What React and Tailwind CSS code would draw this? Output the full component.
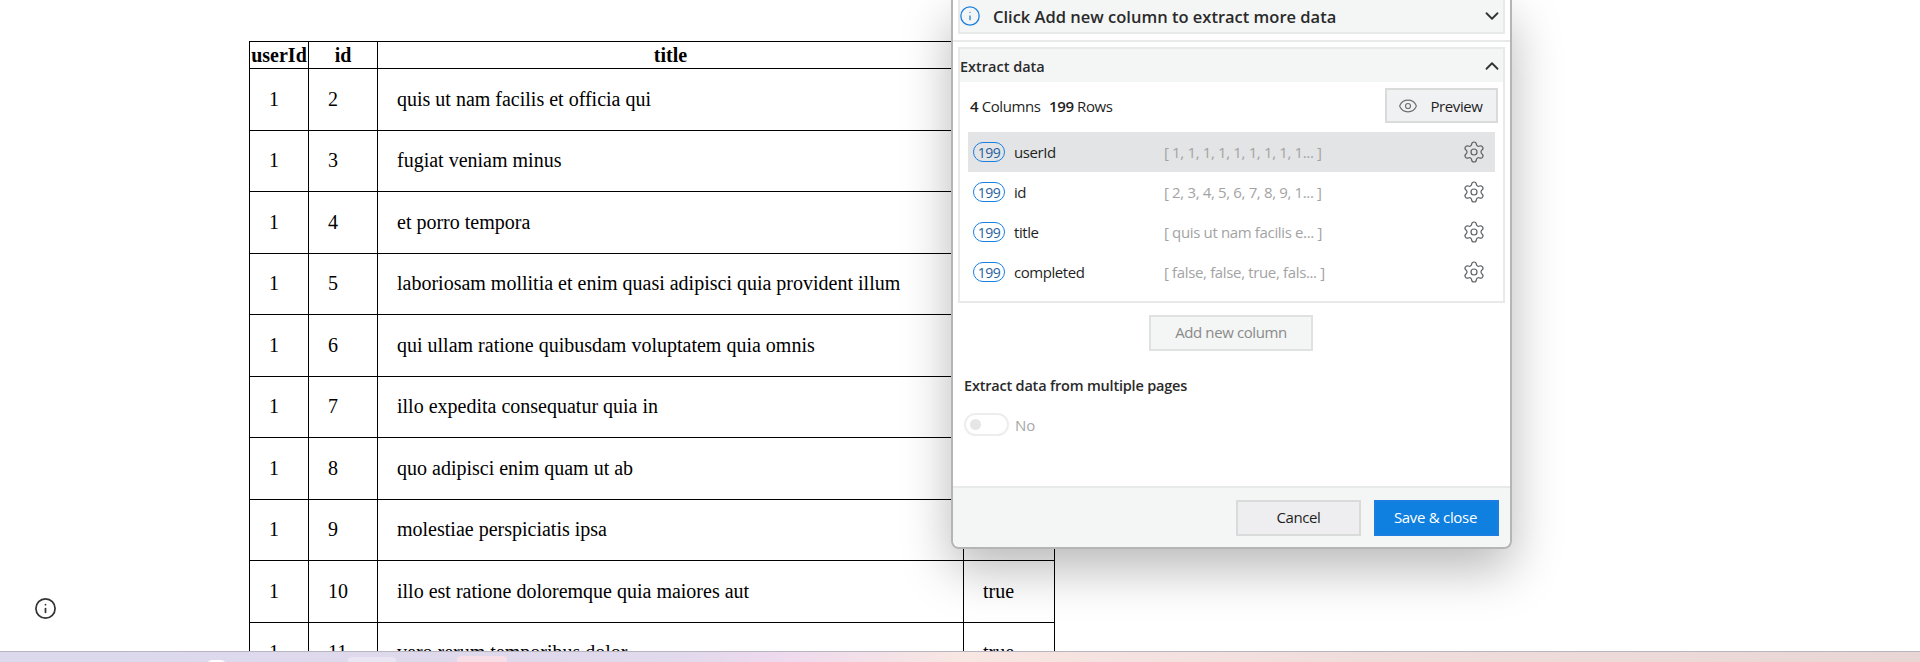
import React from 'react';
import { ChevronDown, ChevronUp, Eye, Info, Settings } from 'lucide-react';

const todos = [
  [2, 'quis ut nam facilis et officia qui', 'false'],
  [3, 'fugiat veniam minus', 'false'],
  [4, 'et porro tempora', 'true'],
  [5, 'laboriosam mollitia et enim quasi adipisci quia provident illum', 'false'],
  [6, 'qui ullam ratione quibusdam voluptatem quia omnis', 'false'],
  [7, 'illo expedita consequatur quia in', 'false'],
  [8, 'quo adipisci enim quam ut ab', 'true'],
  [9, 'molestiae perspiciatis ipsa', 'false'],
  [10, 'illo est ratione doloremque quia maiores aut', 'true'],
  [11, 'vero rerum temporibus dolor', 'true'],
];

const columns = [
  ['userId', '[ 1, 1, 1, 1, 1, 1, 1, 1, 1... ]'],
  ['id', '[ 2, 3, 4, 5, 6, 7, 8, 9, 1... ]'],
  ['title', '[ quis ut nam facilis e... ]'],
  ['completed', '[ false, false, true, fals... ]'],
];

const App = () => {
  return (
    <div className="h-[662px] w-full flex flex-col overflow-hidden bg-white">
      <div className="relative h-[651px] overflow-hidden">
        {/* Page table */}
        <table className="mt-[41px] ml-[249px] w-[806px] table-fixed border-collapse font-['Liberation_Serif',serif] text-[20px] leading-[23px] text-black">
          <thead>
            <tr className="h-[27px]">
              <th className="w-[59px] border border-black p-0 font-bold">userId</th>
              <th className="w-[69px] border border-black p-0 font-bold">id</th>
              <th className="w-[586px] border border-black p-0 font-bold">title</th>
              <th className="border border-black p-0 font-bold">completed</th>
            </tr>
          </thead>
          <tbody>
            {todos.map(([id, title, done]) => (
              <tr key={id} className="h-[61.5px]">
                <td className="border border-black py-0 pl-[19px] pr-0">1</td>
                <td className="border border-black py-0 pl-[19px] pr-0">{id}</td>
                <td className="border border-black py-0 pl-[19px] pr-0">{title}</td>
                <td className="border border-black py-0 pl-[19px] pr-0">{done}</td>
              </tr>
            ))}
          </tbody>
        </table>

        {/* Floating info button */}
        <Info className="absolute left-[34px] top-[597px] h-[23px] w-[23px] text-[#333333]" strokeWidth={1.8} />

        {/* Extract data dialog */}
        <div className="absolute left-[951px] top-0 flex h-[549px] w-[561px] flex-col rounded-b-lg border-x-2 border-b-2 border-[#b4b6b6] bg-white font-['Open_Sans',sans-serif] text-[15px] text-[#1f1f1f] shadow-[0_20px_50px_rgba(0,0,0,0.28)]">
          <div className="mx-[5px] flex h-[34px] items-center border-x-2 border-b-2 border-[#e8eaea] bg-[#f4f6f6]">
            <Info className="-ml-[1px] h-[22px] w-[22px] text-[#1a7fe0]" strokeWidth={1.4} />
            <span className="ml-[12px] flex-1 pt-[2px] text-[16.5px] font-semibold text-[#2a2a2a]">Click Add new column to extract more data</span>
            <ChevronDown className="h-[22px] w-[22px] text-[#333333]" strokeWidth={2} />
          </div>

          <div className="mt-[6px] border-t-2 border-[#e8eaea]" />

          <div className="mx-[5px] mt-[5px] h-[256px] border-2 border-[#e8eaea]">
            <div className="flex h-[33px] items-center justify-between bg-[#f4f6f6]">
              <span className="pt-[2px] text-[14.5px] font-semibold text-[#2a2a2a]">Extract data</span>
              <ChevronUp className="h-[22px] w-[22px] text-[#333333]" strokeWidth={2} />
            </div>
            <div className="flex items-center justify-between pl-[10px] pr-[5px] pt-[6px]">
              <span className="pt-[1px] tracking-[-0.4px]">
                <b className="font-semibold">4</b> Columns <b className="ml-[5px] font-semibold">199</b> Rows
              </span>
              <button className="flex h-[35px] w-[113px] items-center justify-center gap-[12px] border-2 border-[#d9dbdb] bg-[#f0f1f2] pr-[2px] tracking-[-0.4px]">
                <Eye className="h-[20px] w-[20px] text-[#6b7070]" strokeWidth={1.4} />
                <span className="pt-[1px]">Preview</span>
              </button>
            </div>
            <div className="mt-[9px] ml-[8px] w-[527px]">
              {columns.map(([name, preview], i) => (
                <div key={name} className={`flex h-[40px] items-center pl-[5px] ${i === 0 ? 'bg-[#e3e4e5]' : ''}`}>
                  <span className="flex h-[20px] w-[32px] items-center justify-center rounded-full border-[1.5px] border-[#1a7fe0] text-[14px] tracking-[-0.5px] text-[#1f5f9f]">199</span>
                  <span className="ml-[9px] w-[150px] tracking-[-0.44px]">{name}</span>
                  <span className="flex-1 tracking-[-0.35px] text-[#a3a3a3]">{preview}</span>
                  <Settings className="mr-[9px] h-[24px] w-[24px] text-[#5c6164]" strokeWidth={1.2} />
                </div>
              ))}
            </div>
          </div>

          <button className="ml-[196px] mt-[12px] h-[36px] w-[164px] border-2 border-[#e0e2e2] bg-[#f4f5f5] pb-[1px] tracking-[-0.4px] text-[#8a8a8a]">
            Add new column
          </button>

          <div className="ml-[11px] mt-[24px] text-[14.5px] font-semibold tracking-[-0.2px] text-[#2a2a2a]">Extract data from multiple pages</div>

          <div className="ml-[11px] mt-[16px] flex items-center">
            <span className="flex h-[23px] w-[45px] items-center rounded-full border-2 border-[#ededed] pl-[4px]">
              <span className="h-[11px] w-[11px] rounded-full bg-[#e6e6e6]" />
            </span>
            <span className="ml-[6px] pt-[1px] text-[#a8a8a8]">No</span>
          </div>

          <div className="mt-auto flex h-[61px] items-start justify-end gap-[13px] rounded-b-lg border-t-2 border-[#e8eaea] bg-[#f4f6f6] pr-[11px] pt-[12px]">
            <button className="h-[36px] w-[125px] border-2 border-[#d9dbdb] bg-[#eeeef0] pb-[1px] tracking-[-0.4px]">Cancel</button>
            <button className="h-[36px] w-[125px] border-2 border-[#1a7fe0] bg-[#0f7fe0] pb-[1px] pr-[2px] tracking-[-0.3px] text-white">Save &amp; close</button>
          </div>
        </div>
      </div>

      {/* Cut-off desktop taskbar */}
      <div className="flex h-[11px] items-start overflow-hidden border-t border-[#b9b4c4] bg-[linear-gradient(90deg,#dcd9ec_0%,#e1d9ec_35%,#edd9ee_40%,#f8e6e2_50%,#f1dcdc_70%,#e9d6d4_100%)]">
        <span className="ml-[205px] mt-[8px] h-[10px] w-[23px] rounded-t-lg bg-white" />
        <span className="ml-[120px] mt-[5px] h-[10px] w-[48px] rounded-t bg-[#e9e5f3]" />
        <span className="ml-[61px] mt-[4px] h-[10px] w-[50px] rounded-t bg-[#f6dde6]" />
      </div>
    </div>
  );
};

export default App;
